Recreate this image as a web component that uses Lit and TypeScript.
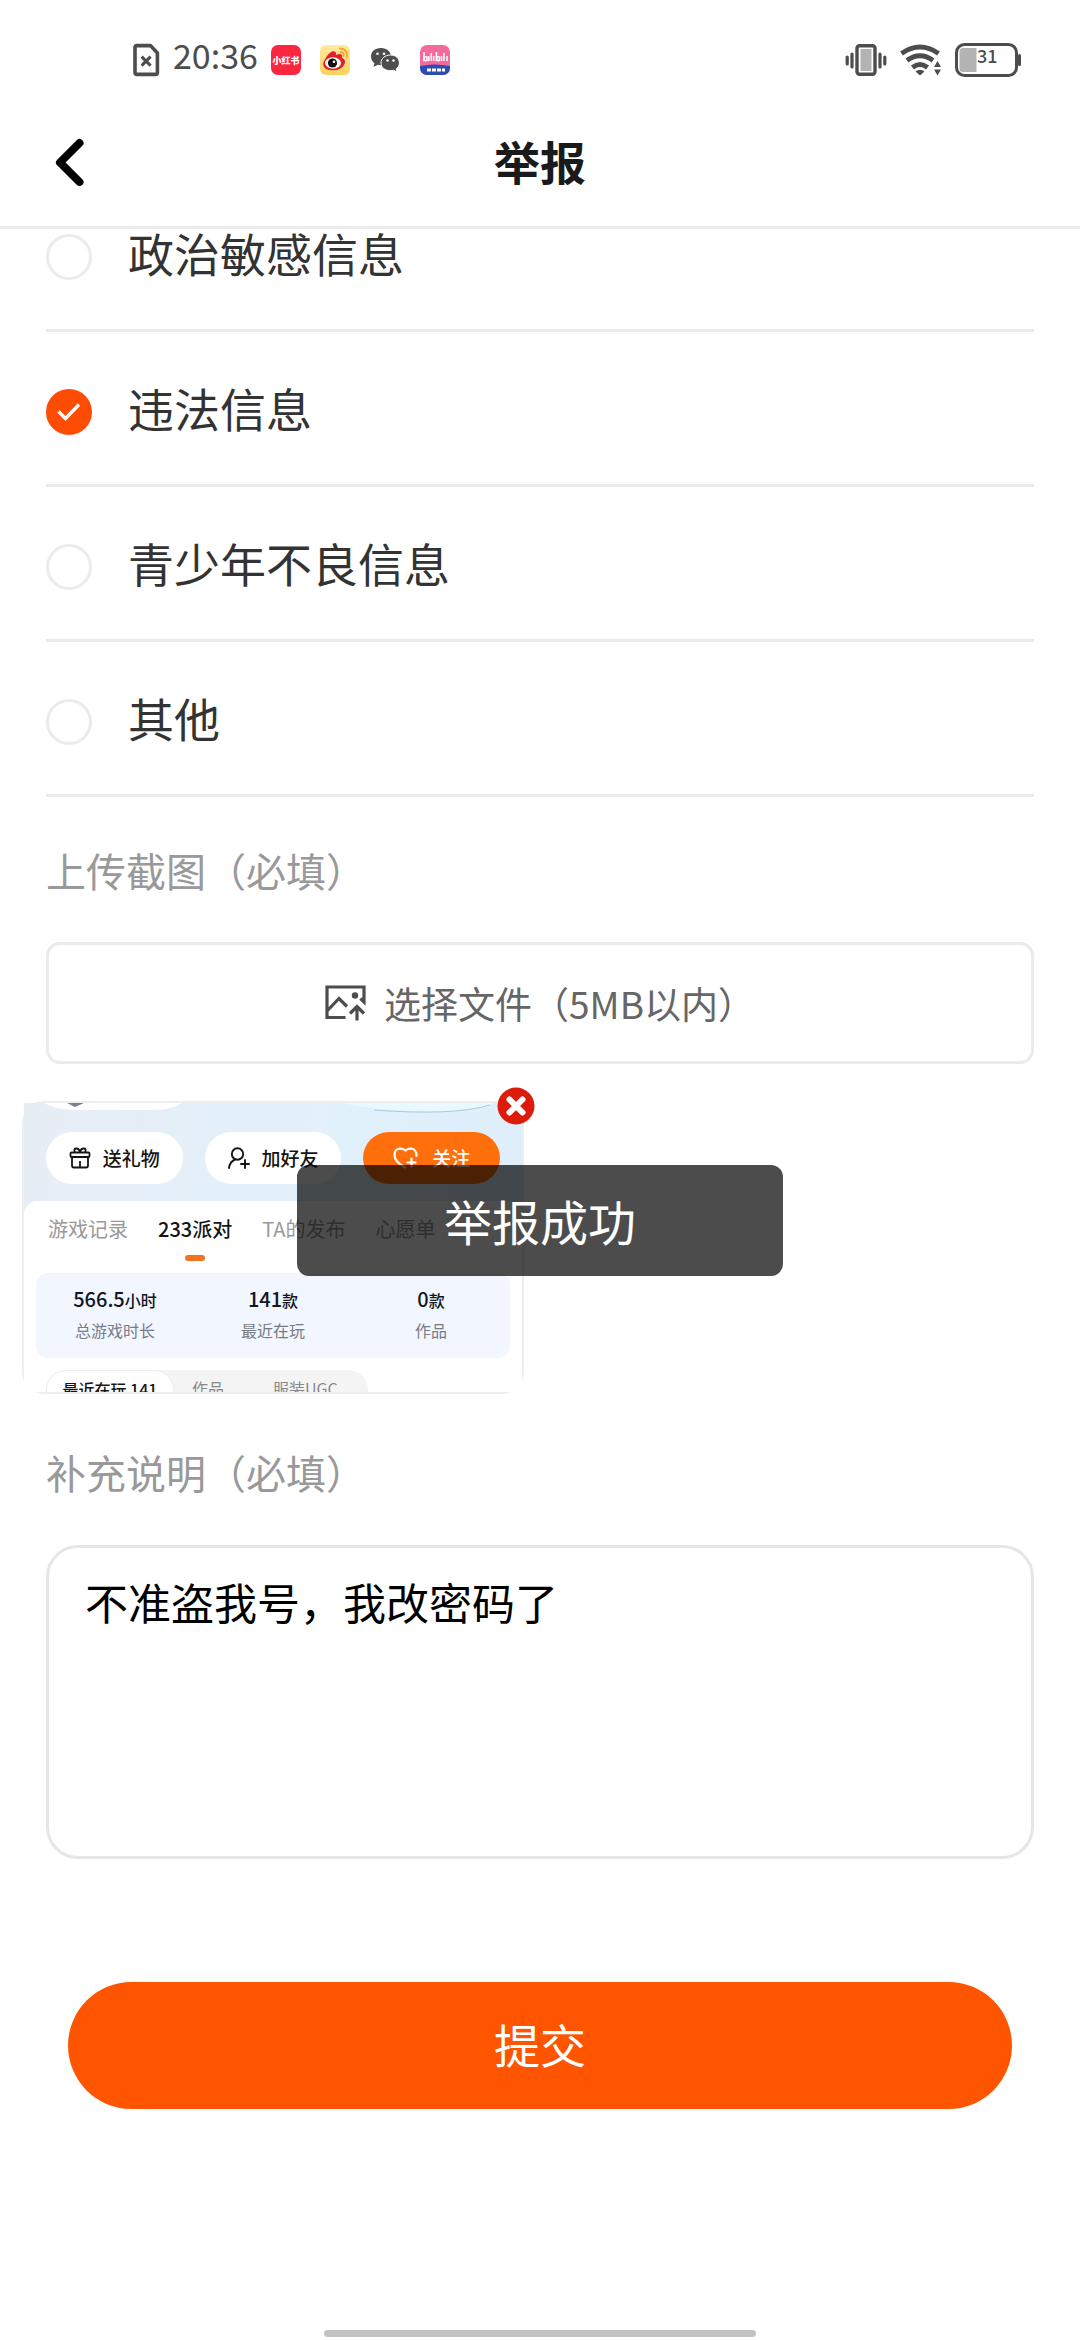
import { LitElement, html, css, svg } from "lit";
import { customElement, state } from "lit/decorators.js";

const FONT = css`"Noto Sans CJK SC", "Noto Sans", sans-serif`;

@customElement("status-bar")
class StatusBar extends LitElement {
  static styles = css`
    :host { display: block; font-family: ${FONT}; color: #4d4d4d; }
    .bar { display: flex; align-items: center; justify-content: space-between; height: 120px; padding: 0 58px 0 132px; }
    .side { display: flex; align-items: center; }
    .left { gap: 13px; }
    .apps { display: flex; align-items: center; gap: 19px; }
    .right { gap: 13px; }
    .time { font-size: 34px; line-height: 40px; padding-bottom: 10px; }
    svg { display: block; }
  `;
  render() {
    return html`<div class="bar">
      <div class="side left">
        <svg width="28" height="34" viewBox="0 0 28 34" fill="none" stroke="#4d4d4d" stroke-width="3.6" stroke-linejoin="round">
          <path d="M5 2.6H18.6L25.4 10V29.4Q25.4 31.4 23.4 31.4H5Q3 31.4 3 29.4V4.6Q3 2.6 5 2.6Z"/>
          <path d="M9.6 13.6L18.6 22.6M18.6 13.6L9.6 22.6" stroke-width="3"/>
        </svg>
        <span class="time">20:36</span>
        <div class="apps">
          <svg width="30" height="30" viewBox="0 0 30 30">
            <rect width="30" height="30" rx="7" fill="#fd2640"/>
            <text x="15" y="18.5" font-size="9" font-weight="900" fill="#fff" text-anchor="middle">小红书</text>
          </svg>
          <svg width="30" height="30" viewBox="0 0 30 30">
            <defs><linearGradient id="wb" x1="0" y1="0" x2="0" y2="1"><stop offset="0" stop-color="#ffe9a0"/><stop offset="1" stop-color="#fcd45c"/></linearGradient></defs>
            <rect width="30" height="30" rx="6" fill="url(#wb)"/>
            <path d="M12 6.5C15 5.500 16.500 7 16 10C20 8 23 9 22 13C25 14 26 17 24 20C21 25 14 26 9 25C4 24 2 20 4 16C6 12 9 8 12 6.500Z" fill="#e0202c"/>
            <ellipse cx="13" cy="18" rx="8" ry="5.800" fill="#fff"/>
            <circle cx="12.500" cy="18" r="4.600" fill="#15100f"/>
            <circle cx="14" cy="16.800" r="1.300" fill="#fff"/>
            <path d="M20 3.500Q27.500 3.500 27 12M20.500 7Q24 7 23.700 11" fill="none" stroke="#f3a52a" stroke-width="1.800" stroke-linecap="round"/>
          </svg>
          <svg width="32" height="30" viewBox="0 0 32 30">
            <path d="M12 3C5.500 3 2 7 2 11.500C2 14.500 3.500 16.800 5.500 18.300L4.500 22L8.700 19.800C9.700 20.100 11 20.200 12 20.200C18 20.200 22 16.500 22 11.500C22 7 18 3 12 3Z" fill="#4d4d4d"/>
            <path d="M21.500 10C15.800 10 12 13.500 12 18C12 22.500 15.800 25.600 21.500 25.600C22.600 25.600 23.700 25.500 24.500 25.200L28 27L27.200 23.900C29.200 22.500 30.400 20.500 30.400 18C30.400 13.500 27 10 21.500 10Z" fill="#4d4d4d" stroke="#fff" stroke-width="1"/>
            <g fill="#fff"><circle cx="8.500" cy="8.800" r="1.300"/><circle cx="15" cy="8.800" r="1.300"/><circle cx="18.500" cy="15.500" r="1.200"/><circle cx="24.500" cy="15.500" r="1.200"/></g>
          </svg>
          <svg width="30" height="30" viewBox="0 0 30 30">
            <defs><clipPath id="bc"><rect width="30" height="30" rx="7"/></clipPath></defs>
            <g clip-path="url(#bc)">
              <rect width="30" height="30" fill="#f36a9c"/>
              <path d="M0 21Q15 18 30 21V30H0Z" fill="#2b4cb0"/>
              <path d="M7 25H25" stroke="#fff" stroke-width="3" stroke-dasharray="4 1"/>
              <path d="M4 7V16M16.500 7V16M11.300 8V16M24 8V16M27 11V16M13.600 11V16M8.900 11V16M21.600 11V16" stroke="#fff" stroke-width="1.500"/>
              <path d="M4 12H7V15.500H4ZM16.500 12H19.500V15.500H16.500Z" fill="none" stroke="#fff" stroke-width="1.500"/>
            </g>
          </svg>
        </div>
      </div>
      <div class="side right">
        <svg width="42" height="32" viewBox="0 0 42 32">
          <rect x="12" y="1.800" width="18" height="28.400" rx="2.500" fill="#fff" stroke="#4d4d4d" stroke-width="3.400"/>
          <rect x="15.500" y="5" width="11" height="22" fill="#b3b3b3"/>
          <path d="M7 10V23M2.200 13V20M35 10V23M39.800 13V20" stroke="#4d4d4d" stroke-width="3.200" stroke-linecap="round"/>
        </svg>
        <svg width="42" height="32" viewBox="0 0 42 32">
          <g fill="none" stroke="#4d4d4d" stroke-width="5">
            <path d="M1.500 9.500Q20 -3.500 38.500 9.500"/><path d="M7 16.500Q20 7 33 16.500"/><path d="M12.500 23.500Q20 17.500 27.500 23.500"/>
          </g>
          <path d="M15.500 27.500Q20 24 24.500 27.500L20 31.500Z" fill="#4d4d4d"/>
          <path d="M34 23L37.500 17L41 23ZM34 25.500L37.500 31.500L41 25.500Z" fill="#4d4d4d"/>
        </svg>
        <svg width="67" height="34" viewBox="0 0 67 34">
          <rect x="1.500" y="1.500" width="60" height="31" rx="8" fill="#fff" stroke="#4d4d4d" stroke-width="3"/>
          <path d="M8 5H21.500V29H8Q4.500 29 4.500 25.500V8.500Q4.500 5 8 5Z" fill="#b3b3b3"/>
          <path d="M64.500 12.500V21.500" stroke="#4d4d4d" stroke-width="3" stroke-linecap="round"/>
          <text x="22" y="20" font-size="18" font-weight="500" fill="#4d4d4d">31</text>
        </svg>
      </div>
    </div>`;
  }
}

const stats = [
  { value: "566.5", unit: "小时", label: "总游戏时长" },
  { value: "141", unit: "款", label: "最近在玩" },
  { value: "0", unit: "款", label: "作品" },
];

const giftIcon = svg`<svg width="22" height="22" viewBox="0 0 22 22" fill="none" stroke="#151515" stroke-width="1.800" stroke-linejoin="round">
  <rect x="1.500" y="5.500" width="19" height="4.500" rx="1"/><path d="M3 10V18.500Q3 20.500 5 20.500H17Q19 20.500 19 18.500V10M11 14V20M6 5Q4 1.500 7.500 1.500Q10 1.500 11 5Q12 1.500 14.500 1.500Q18 1.500 16 5"/></svg>`;
const friendIcon = svg`<svg width="22" height="22" viewBox="0 0 22 22" fill="none" stroke="#151515" stroke-width="1.900" stroke-linecap="round">
  <circle cx="9.500" cy="7" r="5.700"/><path d="M1 21Q2 14.500 7 12.500M17 13V21M13 17H21"/></svg>`;
const heartIcon = svg`<svg width="25" height="22" viewBox="0 0 25 22" fill="none" stroke="#fff" stroke-width="2.200" stroke-linecap="round">
  <path d="M12 20.500Q1.500 14.500 1.500 8Q1.500 2 7 1.500Q10 1.500 12.500 3.500Q15 1.500 18 1.500Q23.500 2 23.500 9M18.500 11.500V19.500M14.500 15.500H22.500"/></svg>`;

@customElement("shot-preview")
class ShotPreview extends LitElement {
  static styles = css`
    :host { display: block; font-family: ${FONT}; }
    .frame { position: relative; width: 498px; border: 2px solid #eee; border-radius: 22px; }
    .shot { height: 289px; overflow: hidden; background: linear-gradient(100deg, #e8edf5, #e1f1fc 60%, #ddeefa); }
    .top svg { display: block; }
    .actions { display: flex; gap: 22px; padding: 0 22px; height: 69px; align-items: flex-start; }
    .pill { display: flex; align-items: center; justify-content: center; gap: 12px; flex: 1; height: 52px; border-radius: 26px; background: #fff; color: #151515; font-size: 19px; font-weight: 500; line-height: 24px; }
    .follow { background: #ff700d; color: #fff; gap: 14px; }
    .card { background: #fff; border-radius: 14px 14px 0 0; }
    .tabs { display: flex; gap: 30px; padding: 16px 0 0 24px; height: 56px; font-size: 20px; line-height: 24px; color: #999; }
    .active { color: #151515; font-weight: 500; display: flex; flex-direction: column; align-items: center; gap: 14px; }
    .active::after { content: ""; width: 20px; height: 6px; border-radius: 3px; background: #f47321; }
    .stats { display: grid; grid-template-columns: repeat(3, 1fr); margin: 0 12px; padding: 14px 0 18px; background: #f1f6ff; border-radius: 12px; text-align: center; }
    .value { font-size: 20px; line-height: 24px; font-weight: 500; color: #111722; }
    .unit { font-size: 16px; }
    .label { font-size: 16px; line-height: 20px; padding-top: 8px; color: #777c86; }
    .seg { display: flex; gap: 18px; width: 322px; margin: 12px 0 0 22px; height: 40px; background: #f4f4f4; border-radius: 20px; font-size: 16px; line-height: 36px; color: #888; }
    .on { background: #fff; border-radius: 20px; width: 128px; text-align: center; color: #151515; font-weight: 500; border: 1px solid #eee; box-sizing: border-box; }
    .gap { padding-left: 31px; }
    .close { position: absolute; right: -14px; top: -17px; width: 40px; height: 40px; padding: 0; border: 0; background: none; }
    .close svg { display: block; }
  `;
  render() {
    return html`<div class="frame">
      <div class="shot">
        <div class="top">
          <svg width="498" height="29" viewBox="0 0 498 29">
            <path d="M20 0Q32 7 52 7H130Q148 7 158 0Z" fill="#fff"/>
            <path d="M43 0H60L51 4Z" fill="#7a7f90"/>
            <path d="M320 0Q350 8 410 8Q450 8 470 0Z" fill="#eaf8ff"/>
            <path d="M350 7Q430 13 466 2" fill="none" stroke="#a9cddb" stroke-width="1"/>
          </svg>
        </div>
        <div class="actions">
          <span class="pill">${giftIcon}送礼物</span>
          <span class="pill">${friendIcon}加好友</span>
          <span class="pill follow">${heartIcon}关注</span>
        </div>
        <div class="card">
          <div class="tabs"><span>游戏记录</span><span class="active">233派对</span><span>TA的发布</span><span>心愿单</span></div>
          <div class="stats">
            ${stats.map((s) => html`<div>
              <div class="value">${s.value}<span class="unit">${s.unit}</span></div>
              <div class="label">${s.label}</div>
            </div>`)}
          </div>
          <div class="seg"><span class="on">最近在玩 141</span><span>作品</span><span class="gap">服装UGC</span></div>
        </div>
      </div>
      <button class="close" aria-label="删除图片">
        <svg width="40" height="40" viewBox="0 0 40 40">
          <circle cx="20" cy="20" r="18.500" fill="#dc1b0b"/>
          <path d="M13.500 13.500L26.500 26.500M26.500 13.500L13.500 26.500" stroke="#fff" stroke-width="6" stroke-linecap="round"/>
        </svg>
      </button>
    </div>`;
  }
}

@customElement("app-root")
class AppRoot extends LitElement {
  static styles = css`
    :host { display: block; font-family: ${FONT}; color: #333; background: #fff; }
    * { box-sizing: border-box; }
    .page { position: relative; display: flex; flex-direction: column; min-height: 100vh; }
    .head { display: grid; grid-template-columns: 1fr auto 1fr; align-items: center; height: 109px; padding: 0 46px 22px; border-bottom: 3px solid #ebebeb; }
    .back { justify-self: start; padding: 0; border: 0; background: none; }
    .back svg, .upload svg, .mark { display: block; }
    .title { margin: 0; padding-bottom: 4px; font-size: 46px; line-height: 60px; font-weight: 700; color: #1a1a1a; }
    .body { flex: 1; }
    .list { margin: 0 46px; padding: 0; border: 0; }
    .row { display: flex; align-items: flex-end; gap: 36px; height: 155px; padding-bottom: 49px; border-bottom: 3px solid #ebebeb; font-size: 46px; line-height: 46px; }
    .row:first-child { height: 103px; }
    .name { padding-bottom: 5px; }
    .dot { display: grid; }
    .dot > * { grid-area: 1 / 1; }
    .radio { appearance: none; width: 46px; height: 46px; margin: 0; border: 3px solid #ebebeb; border-radius: 50%; background: #fff; }
    .radio:checked { border-color: #ff4c05; background: #ff4c05; }
    .mark { pointer-events: none; }
    .section { display: block; margin: 0 46px; font-size: 40px; line-height: 60px; color: #999; }
    .first { padding-top: 43px; }
    .upload { display: flex; align-items: center; justify-content: center; gap: 18px; height: 122px; margin: 42px 46px 37px; border: 3px solid #ebebeb; border-radius: 14px; font-size: 37px; line-height: 48px; color: #666; }
    .file { position: absolute; width: 1px; height: 1px; opacity: 0; }
    .preview { padding: 0 22px 48px; }
    .note { display: block; width: calc(100% - 92px); height: 314px; margin: 43px 46px 0; padding: 23px 36px; border: 3px solid #e6e6e6; border-radius: 32px; background: #fff; font: 43px/60px ${FONT}; color: #000; resize: none; outline: none; }
    .submit { display: block; width: calc(100% - 136px); height: 127px; margin: 123px 68px 0; padding: 0 0 5px; border: 0; border-radius: 64px; background: #f50; color: #fff; font: 46px/60px ${FONT}; }
    .toast { position: absolute; top: 1165px; left: 50%; transform: translateX(-50%); padding: 23px 147px 24px; border-radius: 12px; background: rgba(0, 0, 0, 0.7); color: #fff; font-size: 48px; line-height: 64px; white-space: nowrap; }
    .home { align-self: center; width: 40%; height: 7px; margin-bottom: 3px; border-radius: 4px; background: #c1c1c1; }
  `;

  @state() private chosen = "违法信息";
  private reasons = ["政治敏感信息", "违法信息", "青少年不良信息", "其他"];

  render() {
    return html`<div class="page">
      <status-bar></status-bar>
      <header class="head">
        <button class="back" aria-label="返回">
          <svg width="46" height="50" viewBox="0 0 46 50" fill="none" stroke="#000" stroke-width="8" stroke-linecap="round" stroke-linejoin="round"><path d="M33.500 6L14 25.500L33.500 45"/></svg>
        </button>
        <h1 class="title">举报</h1>
      </header>
      <main class="body">
        <fieldset class="list">
          ${this.reasons.map((r) => html`<label class="row">
            <span class="dot">
              <input class="radio" type="radio" name="reason" .checked=${r === this.chosen} @change=${() => (this.chosen = r)} />
              ${r === this.chosen
                ? html`<svg class="mark" width="46" height="46" viewBox="0 0 46 46" fill="none" stroke="#fff" stroke-width="3.400"><path d="M12.500 22.500L19.500 29.500L33 15.500"/></svg>`
                : null}
            </span>
            <span class="name">${r}</span>
          </label>`)}
        </fieldset>
        <div class="section first">上传截图（必填）</div>
        <input class="file" id="file" type="file" accept="image/*" />
        <label class="upload" for="file">
          <svg width="41" height="36" viewBox="0 0 41 36" fill="none" stroke="#4d4d4d" stroke-width="3.200">
            <path d="M20.500 32.500H2V2H39V17L35.500 13.500M2.500 25.500L14 13.500L22 21.500"/>
            <circle cx="30" cy="10.500" r="3.200" fill="#4d4d4d" stroke="none"/>
            <path d="M32 35.500V22.500M25 28.500L32 21.500L39 28.500"/>
          </svg>
          <span>选择文件（5MB以内）</span>
        </label>
        <div class="preview"><shot-preview></shot-preview></div>
        <label class="section" for="note">补充说明（必填）</label>
        <textarea class="note" id="note" .value=${"不准盗我号，我改密码了"}></textarea>
        <button class="submit">提交</button>
      </main>
      <div class="toast" role="status">举报成功</div>
      <div class="home"></div>
    </div>`;
  }
}
